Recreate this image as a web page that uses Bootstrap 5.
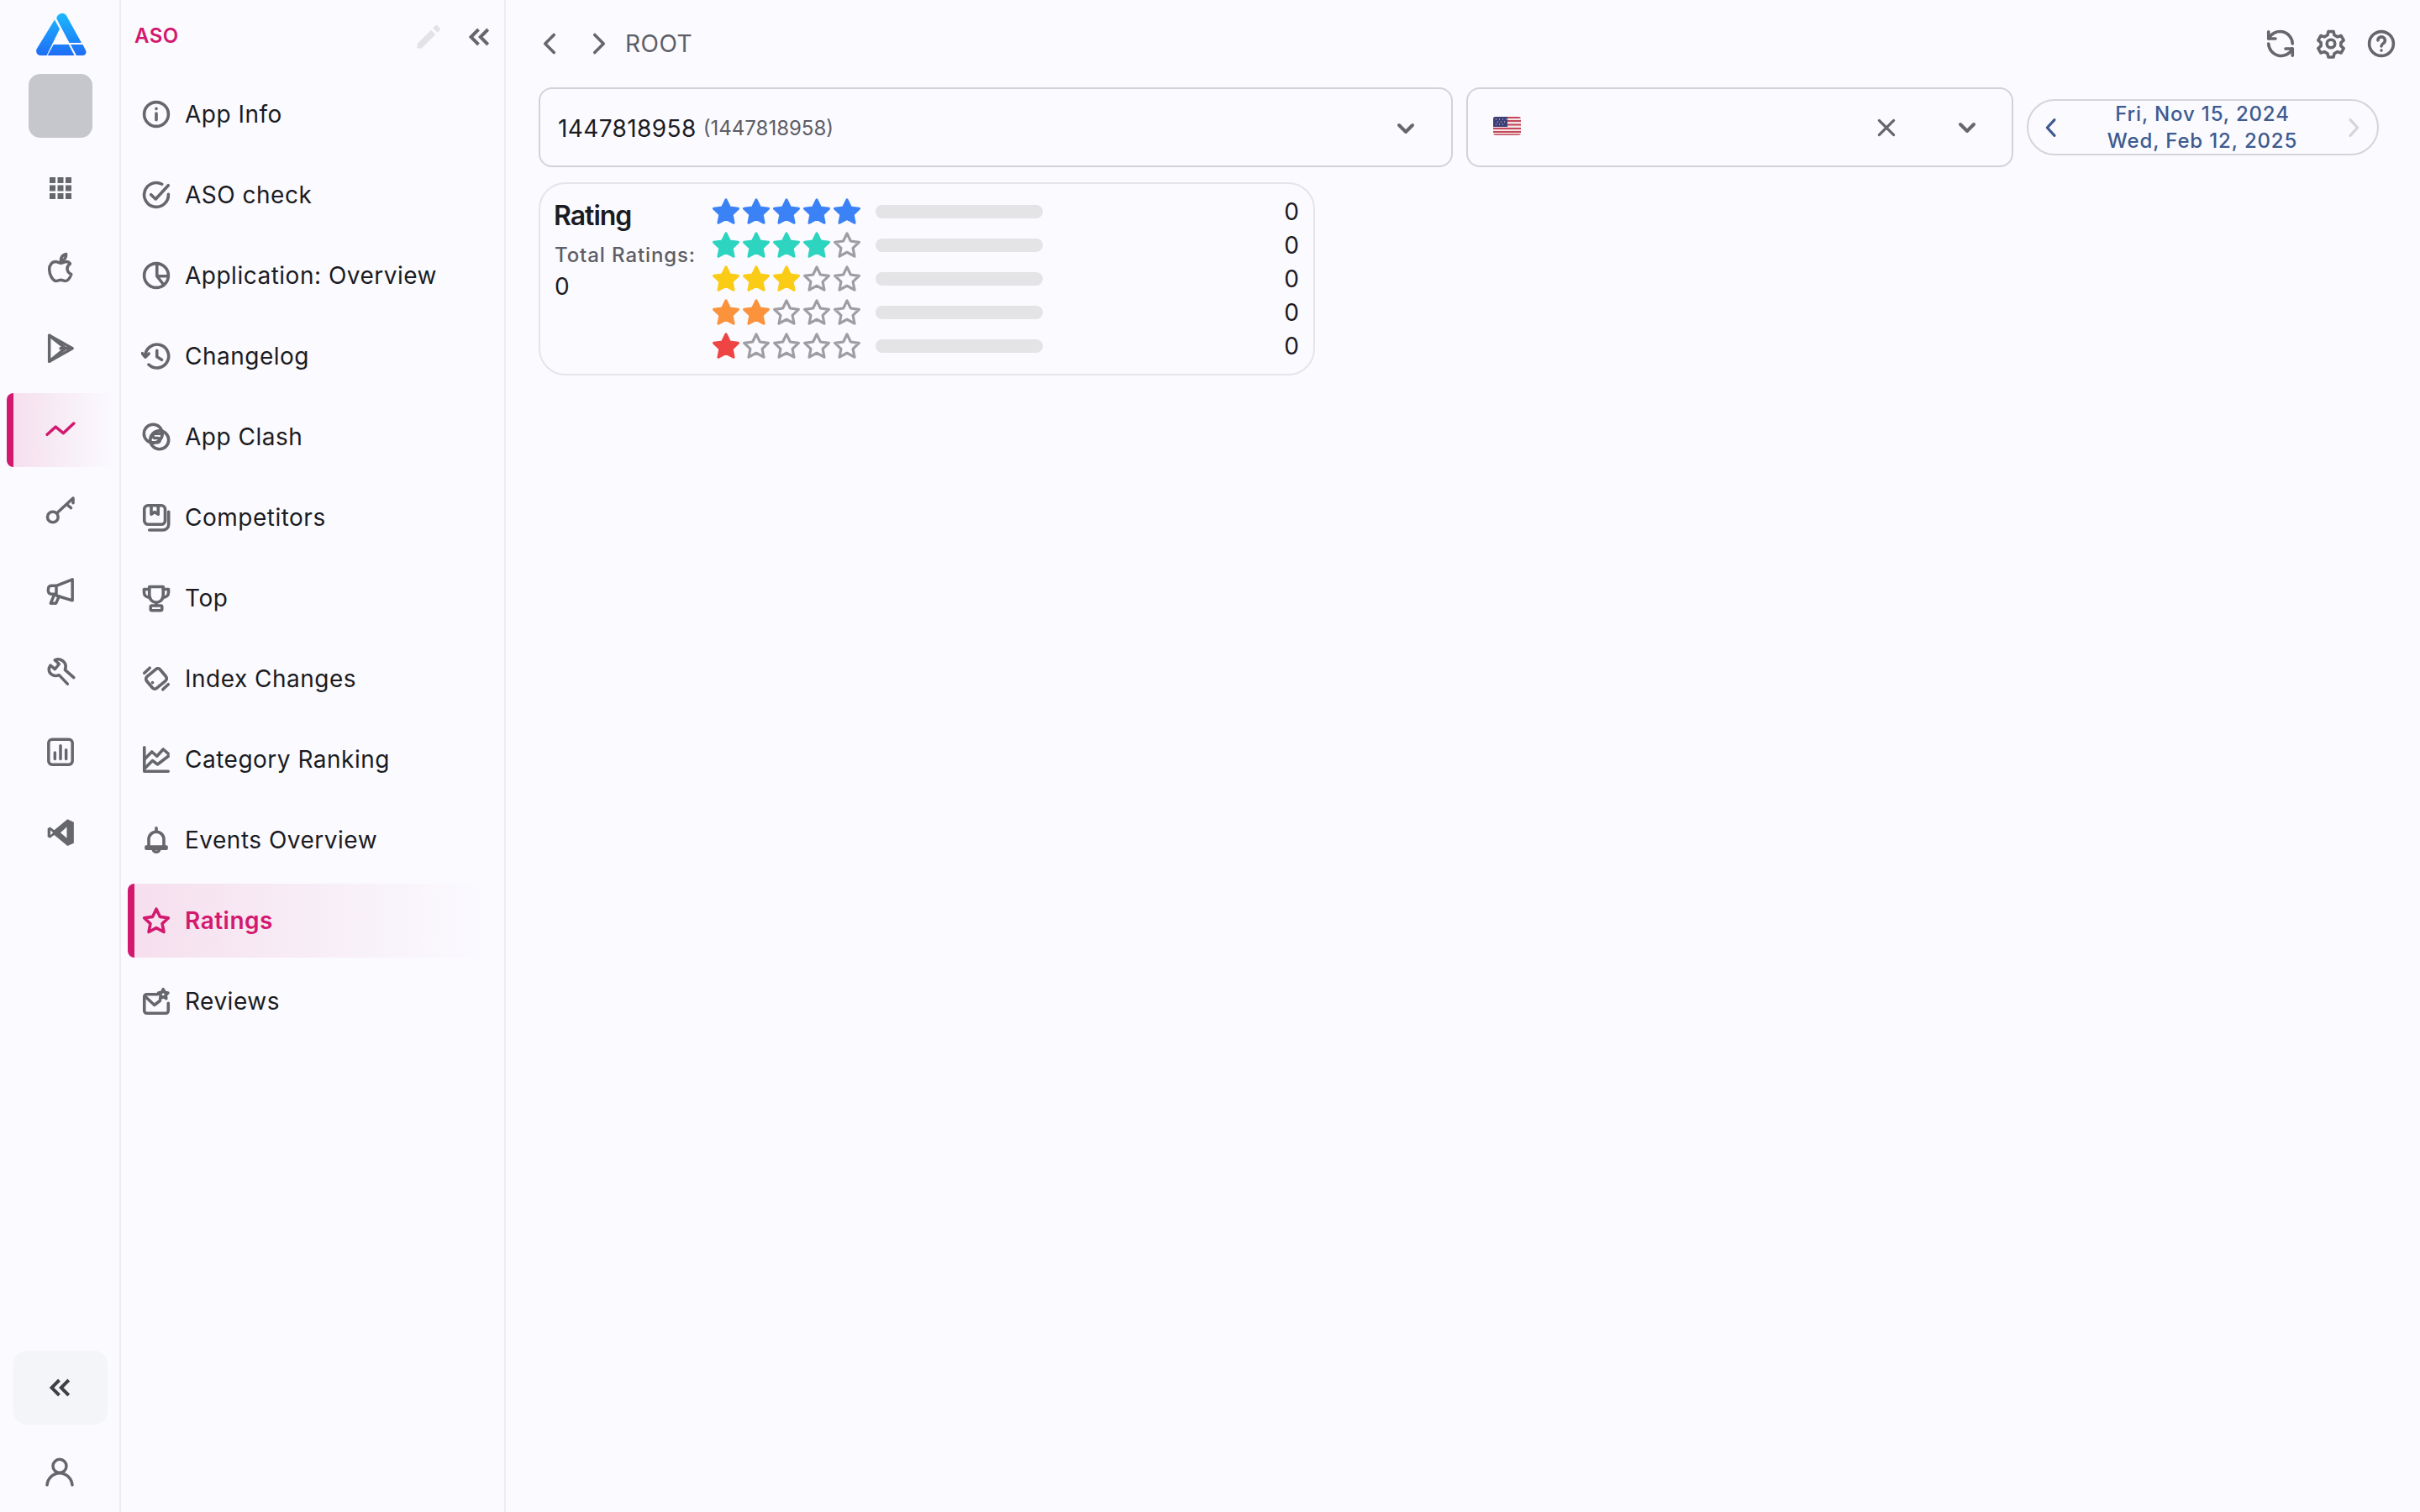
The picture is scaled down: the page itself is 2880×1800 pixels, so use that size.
<!DOCTYPE html>
<html lang="en">
<head>
    <meta charset="UTF-8">
    <meta name="viewport" content="width=device-width, initial-scale=1.0">
    <title>Ratings - ASO</title>
    <link href="https://cdn.jsdelivr.net/npm/bootstrap@5.3.2/dist/css/bootstrap.min.css" rel="stylesheet">
    <style>
        body {
            background-color: #fafaff;
            color: #1b1b22;
            font-family: Inter, "Liberation Sans", sans-serif;
            height: 1800px;
            overflow: hidden;
        }

        .ic {
            fill: none;
            stroke: #66666d;
            stroke-width: 2.4;
            stroke-linecap: round;
            stroke-linejoin: round;
            width: 36px;
            height: 36px;
            flex-shrink: 0;
        }

        .ic-fill {
            fill: #66666d;
            stroke: none;
        }

        .ic-sm {
            width: 32px;
            height: 32px;
        }

        .ic-rail {
            width: 40px;
            height: 40px;
            stroke-width: 2.1;
        }

        /* rail on the far left */
        .rail {
            width: 144px;
            height: 1800px;
            border-right: 2px solid #ececf2;
            padding-top: 13px;
            flex-shrink: 0;
        }

        .app-logo {
            width: 60px;
            height: 54px;
            margin-left: 43px;
        }

        .app-thumb {
            width: 76px;
            height: 76px;
            margin: 21px 0 16px 34px;
            background-color: #c5c7cd;
            border-radius: 14px;
        }

        .rail-item {
            width: 128px;
            height: 88px;
            margin-left: 8px;
        }

        .rail-item + .rail-item {
            margin-top: 8px;
        }

        .is-active {
            background: linear-gradient(90deg, #f6dfee 0%, #f7e9f3 35%, rgba(250, 250, 255, 0) 100%);
            border-left: 8px solid #d3196f;
            border-radius: 8px 0 0 8px;
            color: #d3196f !important;
        }

        .is-active .ic {
            stroke: #d3196f;
        }

        .rail .is-active {
            padding-right: 8px;
        }

        .rail-toggle {
            width: 112px;
            height: 88px;
            margin-left: 16px;
            background-color: #f4f5f8;
            border-radius: 16px;
        }

        .rail-user {
            height: 40px;
            margin: 36px 0 28px;
        }

        /* section menu */
        .side-menu {
            width: 458px;
            height: 1800px;
            border-right: 2px solid #ececf2;
            flex-shrink: 0;
            padding: 0 8px;
        }

        .side-head {
            height: 92px;
            padding: 0 3px 5px 8px;
        }

        .side-title {
            color: #d3196f;
            font-size: 24px;
            font-weight: 600;
            letter-spacing: .5px;
            margin-bottom: 1px;
        }

        .side-collapse {
            margin-left: 25px;
        }

        .side-link {
            width: 426px;
            height: 88px;
            margin-bottom: 8px;
            padding: 0 0 0 16px;
            gap: 16px;
            color: #1b1b22;
            font-size: 28px;
            letter-spacing: .5px;
        }

        .side-link.is-active {
            padding-left: 8px;
            font-weight: 600;
        }

        /* content */
        .content-area {
            padding: 0 49px 0 39px;
        }

        .top-line {
            height: 104px;
            margin-right: -21px;
        }

        .nav-back {
            margin-left: -5px;
        }

        .nav-forward {
            margin-left: 23px;
        }

        .crumb {
            color: #5d5e66;
            font-size: 28px;
            letter-spacing: .5px;
            margin-left: 13px;
        }

        .filter-box {
            height: 95px;
            border: 2px solid #d2d3da;
            border-radius: 16px;
        }

        .filter-app {
            padding: 2px 38px 0 21px;
        }

        .filter-country {
            width: 651px;
            padding: 0 37px 0 30px;
        }

        .flag-ic {
            margin-bottom: 3px;
        }

        .chev-gap {
            margin-left: 64px;
        }

        .app-id {
            font-size: 28px;
            letter-spacing: .4px;
        }

        .app-id-sub {
            color: #5d5e66;
            font-size: 24px;
            margin-left: 8px;
        }

        .date-pill {
            width: 419px;
            height: 67px;
            padding: 0 12px 0 11px;
            border: 2px solid #d4d5da;
            border-radius: 34px;
            color: #3f5a8e;
            font-size: 24px;
            font-weight: 500;
            line-height: 32px;
            letter-spacing: .85px;
        }

        .rating-box {
            width: 924px;
            margin-top: 18px;
            padding: 13px 17px 13px 16px;
            border: 2px solid #e4e4ea;
            border-radius: 32px;
        }

        .rating-left {
            width: 187px;
        }

        .rating-title {
            font-size: 32px;
            font-weight: 600;
            letter-spacing: -1px;
            line-height: 44px;
            margin: 3px 0 9px;
        }

        .rating-total {
            color: #5d5e66;
            font-size: 24px;
            font-weight: 500;
            letter-spacing: .9px;
            line-height: 32px;
            padding-left: 1px;
            white-space: nowrap;
        }

        .rating-num {
            font-size: 28px;
            line-height: 42px;
            padding-left: 1px;
        }

        .rate-row {
            height: 40px;
        }

        .star-ic {
            width: 36px;
            height: 36px;
            flex-shrink: 0;
            stroke-width: 2.1;
        }

        .s-off { fill: none; stroke: #9d9da3; }
        .s-blue { fill: #3b82f6; stroke: #3b82f6; }
        .s-teal { fill: #2dd4bf; stroke: #2dd4bf; }
        .s-yellow { fill: #facc15; stroke: #facc15; }
        .s-orange { fill: #fb923c; stroke: #fb923c; }
        .s-red { fill: #ef4444; stroke: #ef4444; }

        .rate-bar {
            width: 199px;
            height: 16px;
            margin-left: 16px;
            background-color: #e4e4e7;
            border-radius: 8px;
        }

        .rate-count {
            font-size: 28px;
            line-height: 40px;
        }
    </style>
</head>
<body>
    <!-- shared shapes -->
    <svg width="0" height="0" class="position-absolute">
        <symbol id="star" viewBox="0 0 24 24"><path d="M12 2.600l2.900 6.100 6.700.9-4.900 4.600 1.300 6.600-6-3.300-6 3.300 1.300-6.600L2.400 9.600l6.700-.9z" stroke-linejoin="round"/></symbol>
        <symbol id="chev-d" viewBox="0 0 24 24"><path d="M6 9l6 6 6-6" fill="none" stroke="#66666d" stroke-width="3" stroke-linecap="round" stroke-linejoin="round"/></symbol>
        <linearGradient id="logoGrad" gradientUnits="userSpaceOnUse" x1="0" y1="0" x2="0" y2="54">
            <stop offset="0" stop-color="#1cbcff"/>
            <stop offset="1" stop-color="#1e6cf5"/>
        </linearGradient>
    </svg>

    <div class="d-flex">
        <!-- rail -->
        <div class="rail d-flex flex-column">
            <svg class="app-logo" viewBox="0 0 60 54">
                <g fill="url(#logoGrad)">
                    <path d="M22 10.500l6 11L12.500 53H5.500C1 53-1 48.500.8 45z"/>
                    <path d="M24.500 7.500C26.500 3 33 .5 36 5.500L54 38H39.500L24.500 9.500z"/>
                    <path d="M20.700 40H38.700l6.800 13H13.500z"/>
                    <path d="M41 40h14.500l3.500 7c1.500 3-.5 6-3.500 6H48z"/>
                </g>
            </svg>
            <div class="app-thumb"></div>

            <div class="rail-item d-flex align-items-center justify-content-center">
                <svg class="ic ic-fill ic-sm" viewBox="0 0 32 32">
                    <rect x="3" y="3" width="7" height="7"/><rect x="12.500" y="3" width="7" height="7"/><rect x="22" y="3" width="7" height="7"/>
                    <rect x="3" y="12.500" width="7" height="7"/><rect x="12.500" y="12.500" width="7" height="7"/><rect x="22" y="12.500" width="7" height="7"/>
                    <rect x="3" y="22" width="7" height="7"/><rect x="12.500" y="22" width="7" height="7"/><rect x="22" y="22" width="7" height="7"/>
                </svg>
            </div>
            <div class="rail-item d-flex align-items-center justify-content-center">
                <svg class="ic ic-rail" viewBox="0 .8 24 24">
                    <path d="M16.300 7.700c-1.500 0-2.700 1-4 1s-2.300-1-3.800-1C6 7.700 4 10 4 13.300c0 3.900 2.600 8.200 4.900 8.200 1.300 0 2-.8 3.300-.8s2 .8 3.200.8c1.900 0 3.500-2.600 4.300-4.800-1.900-.9-2.900-2.300-2.900-3.900 0-1.600.8-2.800 2.100-3.600-.7-1-1.600-1.500-2.600-1.500z"/>
                    <path d="M12.200 7.200c0-2.500 1.500-4.400 3.800-4.900.2 2.500-1.400 4.500-3.800 4.900z"/>
                </svg>
            </div>
            <div class="rail-item d-flex align-items-center justify-content-center">
                <svg class="ic ic-rail" viewBox="0 .8 24 24">
                    <path d="M4 2.800v18.500L20.500 12z"/>
                    <path d="M4 21.300L15.500 12 4 2.800M12 12h8"/>
                </svg>
            </div>
            <div class="rail-item is-active d-flex align-items-center justify-content-center">
                <svg class="ic ic-rail" viewBox="0 .8 24 24">
                    <path d="M2.500 16l6-5.500 5.500 4.500 7.500-7"/>
                </svg>
            </div>
            <div class="rail-item d-flex align-items-center justify-content-center">
                <svg class="ic ic-rail" viewBox="0 .5 24 24">
                    <circle cx="6.500" cy="17" r="3.800"/>
                    <path d="M9.500 14.200L21 3.500M16.500 8l3 2.500M21 3.500V7"/>
                </svg>
            </div>
            <div class="rail-item d-flex align-items-center justify-content-center">
                <svg class="ic ic-rail" viewBox="0 0 24 24">
                    <path d="M20.500 3.500v15L9 15V8zM9 8H5.500C4 8 3.200 9.200 3.200 11s.8 3 2.300 3H9"/>
                    <path d="M7.500 14.500L5 20.500h3.800l2.200-5"/>
                </svg>
            </div>
            <div class="rail-item d-flex align-items-center justify-content-center">
                <svg class="ic ic-rail" viewBox="0 0 24 24">
                    <path d="M8 3.500L11 6.300 8 10 4.800 7.200C3 9.500 3.500 12.500 6 14c1.700 1 3.500.9 5 .2l6 6.300"/>
                    <path d="M8 3.500C10.500 2.300 13.500 3 15 5.500c1 1.700.9 3.400.2 4.900l6.300 5.600"/>
                </svg>
            </div>
            <div class="rail-item d-flex align-items-center justify-content-center">
                <svg class="ic ic-rail" viewBox="0 .5 24 24">
                    <rect x="3.500" y="3" width="17" height="18" rx="2.500"/>
                    <path d="M8 12.500V17M12 7.500V17M16 10.500V17"/>
                </svg>
            </div>
            <div class="rail-item d-flex align-items-center justify-content-center">
                <svg class="ic ic-rail ic-fill" viewBox="0 .5 24 24">
                    <path d="M17 2.500l4.500 2v15l-4.500 2-9.500-7.800L4.500 16 2.800 15V9l1.700-1 3 2.300zM16.500 8L12 12l4.500 4zM4.800 10.200v3.600L6.700 12z"/>
                </svg>
            </div>

            <div class="mt-auto">
                <div class="rail-toggle d-flex align-items-center justify-content-center">
                    <svg class="ic" viewBox="0 0 24 24">
                        <path d="M11 6l-6 6 6 6M18.500 6l-6 6 6 6" stroke="#3f4046" stroke-width="2.600" stroke-linecap="butt" stroke-linejoin="miter"/>
                    </svg>
                </div>
                <div class="rail-user d-flex justify-content-center">
                    <svg class="ic ic-rail" viewBox="0 0 24 24">
                        <circle cx="12" cy="8" r="4.800"/>
                        <path d="M3 21.500c.5-4.700 4.300-8.500 9-8.500s8.500 3.800 9 8.500"/>
                    </svg>
                </div>
            </div>
        </div>

        <!-- section menu -->
        <div class="side-menu">
            <div class="side-head d-flex align-items-center">
                <span class="side-title">ASO</span>
                <svg class="ic ic-fill ms-auto" viewBox="0 0 24 24">
                    <path d="M3 17.500V21h3.500L17.500 10 14 6.500zM15.500 5l3.500 3.500 2-2c.4-.4.4-1 0-1.400L18.900 3c-.4-.4-1-.4-1.400 0z" fill="#e3e3e6"/>
                </svg>
                <svg class="ic side-collapse" viewBox="0 0 24 24">
                    <path d="M11 6l-6 6 6 6M18.500 6l-6 6 6 6" stroke-width="2.600" stroke-linecap="butt" stroke-linejoin="miter"/>
                </svg>
            </div>
            <nav class="nav flex-column">
                <a class="nav-link side-link d-flex align-items-center" href="#">
                    <svg class="ic" viewBox="0 0 24 24"><circle cx="12" cy="12" r="9.600"/><path d="M12 11.300v5.200M12 7.500v.1"/></svg>
                    App Info
                </a>
                <a class="nav-link side-link d-flex align-items-center" href="#">
                    <svg class="ic" viewBox="0 0 24 24"><path d="M21.600 11.500A9.600 9.600 0 1 1 16.500 3.500"/><path d="M7.800 11.800l3.700 3.500L21.500 4.500"/></svg>
                    ASO check
                </a>
                <a class="nav-link side-link d-flex align-items-center" href="#">
                    <svg class="ic" viewBox="0 0 24 24"><circle cx="12" cy="12" r="9.600"/><path d="M12.500 2.500V12.500H21.500M12.500 12.500l5.500 7"/></svg>
                    Application: Overview
                </a>
                <a class="nav-link side-link d-flex align-items-center" href="#">
                    <svg class="ic" viewBox="0 0 24 24"><path d="M3.200 12a9.300 9.300 0 1 1 2.800 6.700"/><path d="M.8 9.800l2.500 3 2.800-2.800M12.500 7.500v5l3.800 2.400"/></svg>
                    Changelog
                </a>
                <a class="nav-link side-link d-flex align-items-center" href="#">
                    <svg class="ic" viewBox="0 0 24 24"><circle cx="9.500" cy="9.500" r="7.300"/><circle cx="14.500" cy="14.500" r="7.300"/><path d="M15.500 9.500H11a1.700 1.700 0 0 0 0 3.500h2a1.700 1.700 0 0 1 0 3.500H8.500"/></svg>
                    App Clash
                </a>
                <a class="nav-link side-link d-flex align-items-center" href="#">
                    <svg class="ic" viewBox="0 0 24 24"><rect x="2.500" y="2.500" width="16.500" height="15" rx="3"/><path d="M8 2.500v7l2.700-1.800 2.800 1.800v-7M21.800 7.500v10a4.500 4.500 0 0 1-4.500 4.500H6.500"/></svg>
                    Competitors
                </a>
                <a class="nav-link side-link d-flex align-items-center" href="#">
                    <svg class="ic" viewBox="0 0 24 24"><path d="M6.500 3h11v7a5.500 5.500 0 0 1-11 0z"/><path d="M6.500 5H2.300v2.500C2.300 10 4.300 11.500 7 11.500M17.500 5h4.200v2.500c0 2.500-2 4-4.700 4M12 15.500V18"/><rect x="7.500" y="18" width="9" height="3.800" rx="1"/></svg>
                    Top
                </a>
                <a class="nav-link side-link d-flex align-items-center" href="#">
                    <svg class="ic" viewBox="0 0 24 24"><rect x="5" y="6" width="14" height="12" rx="2.500" transform="rotate(-40 12 12)"/><path d="M9 15v.1M2.500 7.500L6.800 3.500M17.200 20.500l4.300-4"/></svg>
                    Index Changes
                </a>
                <a class="nav-link side-link d-flex align-items-center" href="#">
                    <svg class="ic" viewBox="0 0 24 24"><path d="M2.500 2.500V21.500H21.500"/><path d="M2.500 12l6-6 4 3.500 5-5.500 4 3.500M3.500 18.500l5.500-5.500 4 3 8.500-6.500"/></svg>
                    Category Ranking
                </a>
                <a class="nav-link side-link d-flex align-items-center" href="#">
                    <svg class="ic" viewBox="0 0 24 24"><path d="M6 17v-5.500a6 6 0 0 1 12 0V17"/><path d="M4 17.300h16v1.500H4zM12 2.500v3M9.500 19.500c.3 1.500 1.200 2 2.500 2s2.200-.5 2.500-2"/></svg>
                    Events Overview
                </a>
                <a class="nav-link side-link is-active d-flex align-items-center" href="#">
                    <svg class="ic" viewBox="0 0 24 24"><path d="M12 2.800l2.900 6.100 6.700.9-4.900 4.600 1.300 6.600-6-3.300-6 3.300 1.300-6.600-4.900-4.600 6.700-.9z"/></svg>
                    Ratings
                </a>
                <a class="nav-link side-link d-flex align-items-center" href="#">
                    <svg class="ic" viewBox="0 0 24 24"><path d="M13 6.500H4.500a2 2 0 0 0-2 2v11a2 2 0 0 0 2 2h15a2 2 0 0 0 2-2v-6"/><path d="M3 8l7.500 7 4.500-3.500"/><path d="M17.500 2.500l1.200 2.400 2.600.4-1.900 1.900.5 2.600-2.400-1.300-2.400 1.300.5-2.600-1.900-1.900 2.600-.4z"/></svg>
                    Reviews
                </a>
            </nav>
        </div>

        <!-- content -->
        <div class="content-area flex-grow-1">
            <div class="top-line d-flex align-items-center">
                <svg class="ic nav-back" viewBox="0 0 24 24"><path d="M15.500 5L8.500 12l7 7"/></svg>
                <svg class="ic nav-forward" viewBox="0 0 24 24"><path d="M8.500 5l7 7-7 7"/></svg>
                <span class="crumb">ROOT</span>
                <div class="ms-auto d-flex align-items-center gap-4">
                    <svg class="ic" viewBox="0 0 24 24"><path d="M2.500 8A10 10 0 0 1 21.500 12M21.500 16A10 10 0 0 1 2.500 12"/><path d="M2.500 2.500V8H8M21.500 21.500V16H16"/></svg>
                    <svg class="ic" viewBox="0 0 24 24"><circle cx="12" cy="12" r="3.200"/><path d="M10 2.300h4l.7 2.900 2.500 1.400 2.900-.9 2 3.500-2.200 2v2.600l2.200 2-2 3.500-2.900-.9-2.500 1.400-.7 2.900h-4l-.7-2.900-2.500-1.400-2.900.9-2-3.500 2.200-2v-2.600l-2.200-2 2-3.500 2.900.9L9.300 5.200z"/></svg>
                    <svg class="ic" viewBox="0 0 24 24"><circle cx="12" cy="12" r="9.600"/><path d="M9.300 9.300a2.800 2.800 0 1 1 4.200 2.500c-1 .6-1.500 1.200-1.500 2.200M12 17.300v.1"/></svg>
                </div>
            </div>

            <div class="d-flex align-items-center gap-3">
                <div class="filter-box filter-app flex-grow-1 d-flex align-items-center">
                    <span class="app-id">1447818958</span>
                    <span class="app-id-sub">(1447818958)</span>
                    <svg class="ic ic-sm ms-auto" viewBox="0 0 24 24"><use href="#chev-d"/></svg>
                </div>
                <div class="filter-box filter-country d-flex align-items-center">
                    <svg class="flag-ic" width="33" height="22" viewBox="0 0 33 22">
                        <defs><clipPath id="flagClip"><rect width="33" height="22" rx="3"/></clipPath></defs>
                        <g clip-path="url(#flagClip)">
                            <rect width="33" height="22" fill="#f3e4e6"/>
                            <path d="M0 0h33v2H0zM0 4h33v2H0zM0 8.500h33v2H0zM0 13h33v2H0zM0 17h33v2H0zM0 20.500h33V22H0z" fill="#c4485a"/>
                            <rect width="17" height="12" fill="#3f3f78"/>
                            <path d="M3 3h1M7 3h1M11 3h1M15 3h1M5 6h1M9 6h1M13 6h1M3 9h1M7 9h1M11 9h1" stroke="#dcdcf0" stroke-width="1"/>
                        </g>
                    </svg>
                    <svg class="ic ic-sm ms-auto" viewBox="0 0 24 24"><path d="M5.500 5.500l13 13M18.500 5.500l-13 13"/></svg>
                    <svg class="ic ic-sm chev-gap" viewBox="0 0 24 24"><use href="#chev-d"/></svg>
                </div>
                <div class="date-pill d-flex align-items-center">
                    <svg class="ic ic-sm" viewBox="0 0 24 24"><path d="M15 5l-6.500 7 6.500 7" stroke="#3f5a8e"/></svg>
                    <div class="flex-grow-1 text-center">Fri, Nov 15, 2024<br>Wed, Feb 12, 2025</div>
                    <svg class="ic ic-sm" viewBox="0 0 24 24"><path d="M9 5l6.500 7L9 19" stroke="#d4d5da"/></svg>
                </div>
            </div>

            <div class="rating-box d-flex">
                <div class="rating-left">
                    <div class="rating-title">Rating</div>
                    <div class="rating-total">Total Ratings:</div>
                    <div class="rating-num">0</div>
                </div>
                <div class="flex-grow-1">
                    <div class="rate-row d-flex align-items-center">
                        <svg class="star-ic s-blue"><use href="#star"/></svg><svg class="star-ic s-blue"><use href="#star"/></svg><svg class="star-ic s-blue"><use href="#star"/></svg><svg class="star-ic s-blue"><use href="#star"/></svg><svg class="star-ic s-blue"><use href="#star"/></svg>
                        <div class="rate-bar"></div>
                        <span class="rate-count ms-auto">0</span>
                    </div>
                    <div class="rate-row d-flex align-items-center">
                        <svg class="star-ic s-teal"><use href="#star"/></svg><svg class="star-ic s-teal"><use href="#star"/></svg><svg class="star-ic s-teal"><use href="#star"/></svg><svg class="star-ic s-teal"><use href="#star"/></svg><svg class="star-ic s-off"><use href="#star"/></svg>
                        <div class="rate-bar"></div>
                        <span class="rate-count ms-auto">0</span>
                    </div>
                    <div class="rate-row d-flex align-items-center">
                        <svg class="star-ic s-yellow"><use href="#star"/></svg><svg class="star-ic s-yellow"><use href="#star"/></svg><svg class="star-ic s-yellow"><use href="#star"/></svg><svg class="star-ic s-off"><use href="#star"/></svg><svg class="star-ic s-off"><use href="#star"/></svg>
                        <div class="rate-bar"></div>
                        <span class="rate-count ms-auto">0</span>
                    </div>
                    <div class="rate-row d-flex align-items-center">
                        <svg class="star-ic s-orange"><use href="#star"/></svg><svg class="star-ic s-orange"><use href="#star"/></svg><svg class="star-ic s-off"><use href="#star"/></svg><svg class="star-ic s-off"><use href="#star"/></svg><svg class="star-ic s-off"><use href="#star"/></svg>
                        <div class="rate-bar"></div>
                        <span class="rate-count ms-auto">0</span>
                    </div>
                    <div class="rate-row d-flex align-items-center">
                        <svg class="star-ic s-red"><use href="#star"/></svg><svg class="star-ic s-off"><use href="#star"/></svg><svg class="star-ic s-off"><use href="#star"/></svg><svg class="star-ic s-off"><use href="#star"/></svg><svg class="star-ic s-off"><use href="#star"/></svg>
                        <div class="rate-bar"></div>
                        <span class="rate-count ms-auto">0</span>
                    </div>
                </div>
            </div>
        </div>
    </div>

    <script src="https://cdn.jsdelivr.net/npm/bootstrap@5.3.2/dist/js/bootstrap.bundle.min.js"></script>
</body>
</html>
